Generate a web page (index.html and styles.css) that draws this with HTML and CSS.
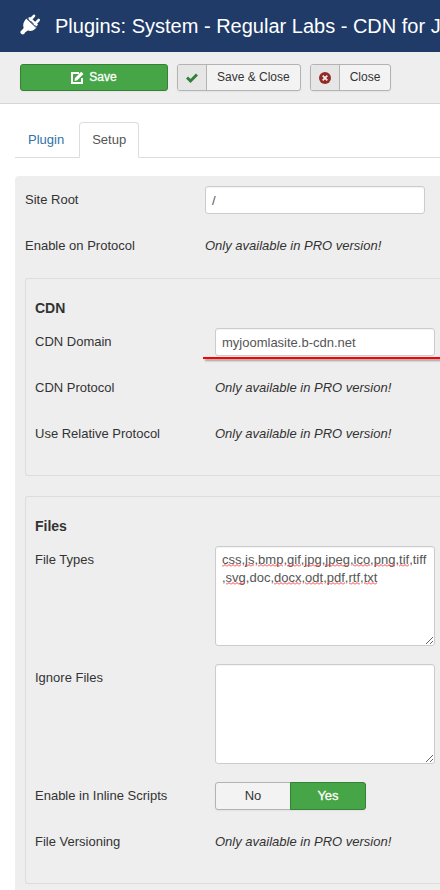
FILE: index.html
```html
<!DOCTYPE html>
<html lang="en">
<head>
<meta charset="utf-8">
<meta name="viewport" content="width=device-width, initial-scale=1">
<title>Plugins: System - Regular Labs - CDN for J</title>
<link rel="stylesheet" href="styles.css">
</head>
<body>
<header class="header">
  <svg class="header-icon" viewBox="0 0 20 20" aria-hidden="true">
    <path fill="#fff" d="M5.500 5.500 7 4.500l9.500 9L15 15c-2 2-4.500 2.500-7.200 1.500L5 18.500C4.500 20.500 2.800 20.800 1.500 20 .2 19.200-.2 17.500 1.500 16.500L3.700 14C2.500 11 3.500 8 5.500 5.500z"/>
    <path fill="#fff" d="M8 4l2-1 8 7.500-1.500 2z"/>
    <path stroke="#fff" stroke-width="2.600" stroke-linecap="round" d="M10.500 5.500 14 1.800M15 10 18.700 6"/>
    <path stroke="#203b68" stroke-width=".8" d="M6.800 4.800 16 13.500"/>
  </svg>
  <h1 class="title">Plugins: System - Regular Labs - CDN for J</h1>
</header>
<div class="toolbar">
  <button class="btn btn-save" type="button">
    <svg class="icon-edit" viewBox="0 0 13 13" aria-hidden="true">
      <path fill="none" stroke="#fff" stroke-width="2" d="M8 2H1v10h10V7"/>
      <path fill="#fff" d="M4 7 10.200.800l2.300 2.300L6.300 9.300 3.500 10z"/>
    </svg>
    Save
  </button>
  <button class="btn btn-split" type="button">
    <span class="btn-icon">
      <svg class="icon-check" viewBox="0 0 12 12" aria-hidden="true"><path fill="none" stroke="#31803a" stroke-width="3" d="M1 5.500l3.500 3.500L11 2.500"/></svg>
    </span>
    <span class="btn-text">Save &amp; Close</span>
  </button>
  <button class="btn btn-split" type="button">
    <span class="btn-icon">
      <svg class="icon-check" viewBox="0 0 12 12" aria-hidden="true"><circle cx="6" cy="6" r="6" fill="#942a25"/><path stroke="#eee" stroke-width="1.800" d="M3.700 3.700l4.600 4.600M8.300 3.700 3.700 8.300"/></svg>
    </span>
    <span class="btn-text">Close</span>
  </button>
</div>
<main class="content">
  <nav class="tabs">
    <a class="tab" href="#plugin">Plugin</a>
    <a class="tab tab-active" href="#setup" aria-current="page">Setup</a>
  </nav>
  <form class="panel" id="setup">
    <div class="row">
      <label class="label" for="root">Site Root</label>
      <input class="field" id="root" type="text" value="/">
    </div>
    <div class="row">
      <span class="label">Enable on Protocol</span>
      <em class="note">Only available in PRO version!</em>
    </div>
    <section class="group">
      <h2 class="group-title">CDN</h2>
      <div class="row">
        <label class="label" for="domain">CDN Domain</label>
        <div class="control">
          <input class="field" id="domain" type="text" value="myjoomlasite.b-cdn.net">
          <span class="marker"></span>
        </div>
      </div>
      <div class="row">
        <span class="label">CDN Protocol</span>
        <em class="note">Only available in PRO version!</em>
      </div>
      <div class="row">
        <span class="label">Use Relative Protocol</span>
        <em class="note">Only available in PRO version!</em>
      </div>
    </section>
    <section class="group">
      <h2 class="group-title">Files</h2>
      <div class="row">
        <label class="label" for="types">File Types</label>
        <div class="control">
          <textarea class="field area" id="types" spellcheck="false">css,js,bmp,gif,jpg,jpeg,ico,png,tif,tiff,svg,doc,docx,odt,pdf,rtf,txt</textarea>
          <svg class="squiggles" viewBox="0 0 220 100" aria-hidden="true">
            <defs>
              <pattern id="wave" width="4" height="3" patternUnits="userSpaceOnUse">
                <path d="M0 2.500 2 .500 4 2.500" fill="none" stroke="#f33" stroke-width="1"/>
              </pattern>
            </defs>
            <g fill="url(#wave)">
              <path d="M7 18h19v3H7zM30 18h9v3h-9zM43 18h25v3H43zM72 18h14v3H72zM90 18h16v3H90zM110 18h24v3h-24zM138 18h17v3h-17zM159 18h21v3h-21zM184 18h10v3h-10z"/>
              <path d="M11 36h19v3H11zM59 36h27v3H59zM90 36h18v3H90zM112 36h18v3h-18zM134 36h11v3h-11zM149 36h13v3h-13z"/>
            </g>
          </svg>
        </div>
      </div>
      <div class="row">
        <label class="label" for="ignore">Ignore Files</label>
        <textarea class="field area" id="ignore"></textarea>
      </div>
      <div class="row">
        <span class="label">Enable in Inline Scripts</span>
        <div class="switch">
          <button class="option" type="button" aria-pressed="false">No</button>
          <button class="option option-on" type="button" aria-pressed="true">Yes</button>
        </div>
      </div>
      <div class="row">
        <span class="label">File Versioning</span>
        <em class="note">Only available in PRO version!</em>
      </div>
    </section>
  </form>
</main>
</body>
</html>
```
FILE: styles.css
```css
* { box-sizing: border-box; }
body {
  margin: 0;
  background: #fff;
  color: #333;
  font: 13px/18px "Liberation Sans", Arial, sans-serif;
  overflow-x: hidden;
}
button, input, textarea { font: inherit; color: inherit; margin: 0; }
.header {
  display: flex;
  align-items: center;
  gap: 15px;
  height: 52px;
  padding-left: 20px;
  background: #203b68;
  overflow: hidden;
}
.header-icon { flex: none; width: 20px; height: 20px; margin-bottom: 4px; overflow: visible; }
.title {
  margin: 0;
  color: #fff;
  font-size: 20px;
  font-weight: 400;
  line-height: 28px;
  white-space: nowrap;
}
.toolbar {
  display: flex;
  gap: 9px;
  padding: 12px 20px;
  background: #eee;
  border-bottom: 1px solid #d6d6d6;
}
.btn {
  display: flex;
  align-items: stretch;
  height: 27px;
  padding: 0;
  border: 1px solid #b3b3b3;
  border-radius: 3px;
  background: #f3f3f3;
  font-size: 12px;
  line-height: 25px;
  box-shadow: 0 1px 2px rgba(0, 0, 0, .05);
  overflow: hidden;
}
.btn-save {
  align-items: center;
  justify-content: center;
  gap: 5px;
  width: 148px;
  border-color: #378137;
  background: #46a546;
  color: #fff;
  -webkit-text-stroke: .3px #fff;
}
.icon-edit { width: 13px; height: 13px; }
.icon-check { width: 12px; height: 12px; }
.btn-icon {
  display: flex;
  align-items: center;
  justify-content: center;
  width: 29px;
  border-right: 1px solid #b3b3b3;
  background: #e6e6e6;
}
.btn-text { padding: 0 10px; }
.content { padding: 18px 0 0 15px; }
.tabs {
  display: flex;
  gap: 2px;
  margin-bottom: 18px;
  box-shadow: inset 0 -1px #ddd;
}
.tab {
  padding: 8px 12px;
  border: 1px solid transparent;
  border-radius: 4px 4px 0 0;
  color: #3071a9;
  text-decoration: none;
}
.tab-active {
  border-color: #ddd #ddd #fff;
  background: #fff;
  color: #555;
}
.panel {
  padding: 10px 0 6px 10px;
  background: #eee;
  border-radius: 4px 0 0 0;
}
.row {
  display: flex;
  align-items: flex-start;
  min-height: 28px;
  margin-bottom: 18px;
}
.label { flex: none; width: 180px; padding-top: 5px; }
.note { padding-top: 5px; }
.control { position: relative; }
.field {
  display: block;
  width: 220px;
  height: 28px;
  padding: 4px 6px;
  border: 1px solid #ccc;
  border-radius: 3px;
  background: #fff;
  color: #555;
  box-shadow: inset 0 1px 1px rgba(0, 0, 0, .05);
}
.area { height: 100px; resize: vertical; overflow: hidden; overflow-wrap: anywhere; }
.marker {
  position: absolute;
  top: 29px;
  left: -12px;
  width: 240px;
  height: 2px;
  background: #f00;
  box-shadow: 2px 2px 2px rgba(0, 0, 0, .35);
}
.squiggles {
  position: absolute;
  inset: 0;
  width: 220px;
  height: 100px;
  pointer-events: none;
}
.group {
  margin-bottom: 20px;
  padding: 20px 0 9px 9px;
  border: 1px solid #ddd;
  border-right: 0;
  border-radius: 3px 0 0 3px;
}
.group:last-child { margin-bottom: 0; }
.group-title { margin: 0 0 11px; font-size: 14px; line-height: 18px; }
.switch { display: flex; }
.option {
  width: 76px;
  height: 28px;
  padding: 0;
  border: 1px solid #b3b3b3;
  border-radius: 3px 0 0 3px;
  background: #f3f3f3;
  box-shadow: 0 1px 2px rgba(0, 0, 0, .05);
}
.option-on {
  margin-left: -1px;
  border-color: #378137;
  border-radius: 0 3px 3px 0;
  background: #46a546;
  color: #fff;
  -webkit-text-stroke: .3px #fff;
}
```
